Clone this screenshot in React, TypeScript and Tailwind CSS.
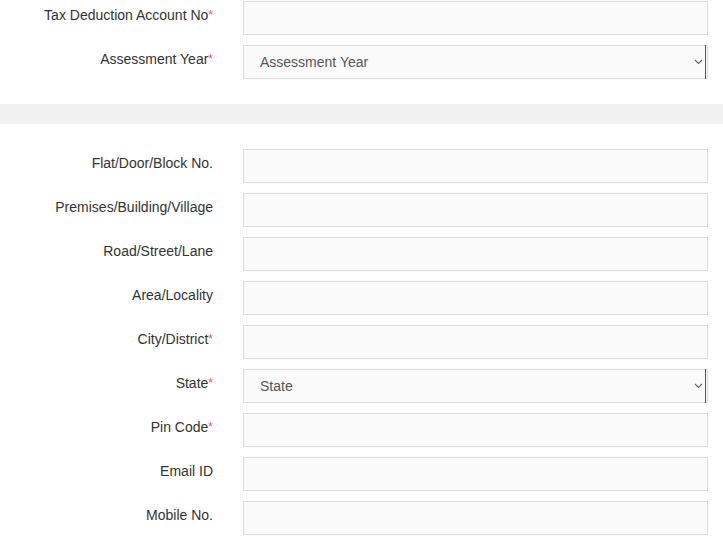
import React from 'react';

function Label({ text, required }: { text: string; required?: boolean }) {
  return (
    <label className="w-[214px] shrink-0 pt-[4px] pr-[1px] text-right text-[14px] leading-[20px] text-[#333]">
      {text}
      {required && <span className="align-top text-[12px] text-[#f0506e]">*</span>}
    </label>
  );
}

function TextRow({ label, required }: { label: string; required?: boolean }) {
  return (
    <div className="flex items-start mb-[10px]">
      <Label text={label} required={required} />
      <input
        type="text"
        className="ml-[29px] h-[34px] w-[465px] border border-[#ddd] bg-[#fafafa] px-4 text-[14px] text-[#555] outline-none"
      />
    </div>
  );
}

function SelectRow({ label, placeholder, required }: { label: string; placeholder: string; required?: boolean }) {
  return (
    <div className="flex items-start mb-[10px]">
      <Label text={label} required={required} />
      <div className="relative ml-[29px] h-[34px] w-[465px]">
        <select className="h-full w-full appearance-none border border-[#ddd] bg-[#fafafa] pl-4 text-[14px] text-[#555] outline-none">
          <option>{placeholder}</option>
        </select>
        <span className="pointer-events-none absolute right-[2px] top-0 h-full w-[1px] bg-[#555]" />
        <svg
          className="pointer-events-none absolute right-[5px] top-[14px]"
          width="9"
          height="6"
          viewBox="0 0 9 6"
          fill="none"
        >
          <path d="M1 1l3.5 3.5L8 1" stroke="#666" strokeWidth="1.2" />
        </svg>
      </div>
    </div>
  );
}

export default function App() {
  return (
    <div className="w-[723px] h-[551px] overflow-hidden bg-white font-['Liberation_Sans',Arial,sans-serif]">
      <div className="pt-[1px] pb-[15px]">
        <TextRow label="Tax Deduction Account No" required />
        <SelectRow label="Assessment Year" placeholder="Assessment Year" required />
      </div>
      <div className="h-[20px] bg-[#f1f1f1]" />
      <div className="pt-[25px]">
        <TextRow label="Flat/Door/Block No." />
        <TextRow label="Premises/Building/Village" />
        <TextRow label="Road/Street/Lane" />
        <TextRow label="Area/Locality" />
        <TextRow label="City/District" required />
        <SelectRow label="State" placeholder="State" required />
        <TextRow label="Pin Code" required />
        <TextRow label="Email ID" />
        <TextRow label="Mobile No." />
      </div>
    </div>
  );
}
